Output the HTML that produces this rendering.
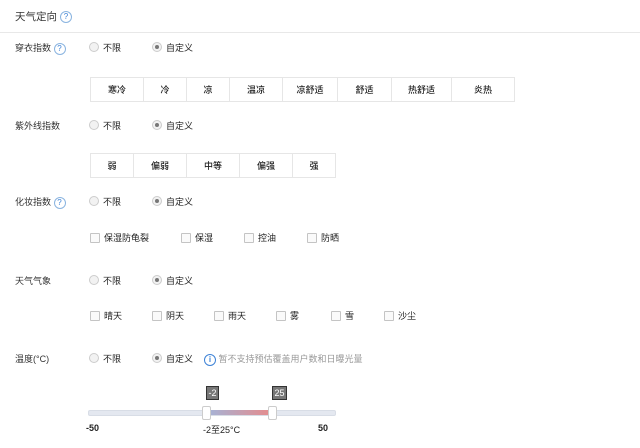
<!DOCTYPE html><html><head><meta charset="utf-8"><style>
body{margin:0;width:640px;height:448px;background:#fff;font-family:"Liberation Sans","Noto Sans CJK SC",sans-serif;font-size:9px;color:#222;position:relative;overflow:hidden}
.a{position:absolute;white-space:nowrap}
.lbl{color:#333}
.q{display:inline-block;width:10px;height:10px;border:1px solid #8ab4e0;border-radius:50%;color:#3d82d6;font-size:8px;text-align:center;line-height:10px;vertical-align:middle}
.r{position:absolute;width:8px;height:8px;border:1px solid #ccc;border-radius:50%;background:#f2f2f2}
.r.on::after{content:"";position:absolute;left:2px;top:2px;width:4px;height:4px;border-radius:50%;background:#777}
.cb{position:absolute;width:8px;height:8px;border:1px solid #c4c4c4;border-radius:1px;background:#fafafa}
table{position:absolute;border-collapse:collapse;font-size:9px;color:#222;font-weight:500}
td{border:1px solid #e6e6e6;text-align:center;height:23px;padding:0}
</style></head><body>
<div class="a" style="left:15px;top:9px;font-size:10.5px;color:#333">天气定向 <span class="q">?</span></div>
<div class="a" style="left:0;top:32px;width:640px;height:1px;background:#e8e8e8"></div>

<div class="a lbl" style="left:15px;top:41px">穿衣指数 <span class="q">?</span></div>
<div class="r" style="left:89px;top:42px"></div><div class="a" style="left:103px;top:41px">不限</div>
<div class="r on" style="left:152px;top:42px"></div><div class="a" style="left:166px;top:41px">自定义</div>
<table style="left:90px;top:77px"><tr><td style="width:52px">寒冷</td><td style="width:42px">冷</td><td style="width:42px">凉</td><td style="width:52px">温凉</td><td style="width:54px">凉舒适</td><td style="width:53px">舒适</td><td style="width:59px">热舒适</td><td style="width:62px">炎热</td></tr></table>

<div class="a lbl" style="left:15px;top:119px">紫外线指数</div>
<div class="r" style="left:89px;top:120px"></div><div class="a" style="left:103px;top:119px">不限</div>
<div class="r on" style="left:152px;top:120px"></div><div class="a" style="left:166px;top:119px">自定义</div>
<table style="left:90px;top:153px"><tr><td style="width:42px">弱</td><td style="width:52px">偏弱</td><td style="width:52px">中等</td><td style="width:52px">偏强</td><td style="width:42px">强</td></tr></table>

<div class="a lbl" style="left:15px;top:195px">化妆指数 <span class="q">?</span></div>
<div class="r" style="left:89px;top:196px"></div><div class="a" style="left:103px;top:195px">不限</div>
<div class="r on" style="left:152px;top:196px"></div><div class="a" style="left:166px;top:195px">自定义</div>
<div class="cb" style="left:90px;top:233px"></div><div class="a" style="left:104px;top:231px">保湿防龟裂</div>
<div class="cb" style="left:181px;top:233px"></div><div class="a" style="left:195px;top:231px">保湿</div>
<div class="cb" style="left:244px;top:233px"></div><div class="a" style="left:258px;top:231px">控油</div>
<div class="cb" style="left:307px;top:233px"></div><div class="a" style="left:321px;top:231px">防晒</div>

<div class="a lbl" style="left:15px;top:274px">天气气象</div>
<div class="r" style="left:89px;top:275px"></div><div class="a" style="left:103px;top:274px">不限</div>
<div class="r on" style="left:152px;top:275px"></div><div class="a" style="left:166px;top:274px">自定义</div>
<div class="cb" style="left:90px;top:311px"></div><div class="a" style="left:104px;top:309px">晴天</div>
<div class="cb" style="left:152px;top:311px"></div><div class="a" style="left:166px;top:309px">阴天</div>
<div class="cb" style="left:214px;top:311px"></div><div class="a" style="left:228px;top:309px">雨天</div>
<div class="cb" style="left:276px;top:311px"></div><div class="a" style="left:290px;top:309px">雾</div>
<div class="cb" style="left:331px;top:311px"></div><div class="a" style="left:345px;top:309px">雪</div>
<div class="cb" style="left:384px;top:311px"></div><div class="a" style="left:398px;top:309px">沙尘</div>

<div class="a lbl" style="left:15px;top:352px">温度(°C)</div>
<div class="r" style="left:89px;top:353px"></div><div class="a" style="left:103px;top:352px">不限</div>
<div class="r on" style="left:152px;top:353px"></div><div class="a" style="left:166px;top:352px">自定义</div>
<div class="a" style="left:204px;top:352px;color:#999"><span style="display:inline-block;width:10px;height:10px;border:1px solid #3d82d6;border-radius:50%;color:#3d82d6;font-size:8px;font-weight:bold;text-align:center;line-height:10px;vertical-align:middle">i</span> 暂不支持预估覆盖用户数和日曝光量</div>

<div class="a" style="left:206px;top:386px;width:11px;height:12px;background:#777;border:1px solid #333;color:#fff;font-size:9px;text-align:center;line-height:12px">-2</div>
<div class="a" style="left:272px;top:386px;width:13px;height:12px;background:#777;border:1px solid #333;color:#fff;font-size:9px;text-align:center;line-height:12px">25</div>
<div class="a" style="left:88px;top:410px;width:246px;height:4px;background:#e4e8f0;border:1px solid #d8dde6;border-radius:2px"></div>
<div class="a" style="left:207px;top:410px;width:66px;height:5px;background:linear-gradient(to right,#a4b4d8,#e88a8a)"></div>
<div class="a" style="left:202px;top:406px;width:7px;height:12px;background:#fff;border:1px solid #ccc;border-radius:2px"></div>
<div class="a" style="left:268px;top:406px;width:7px;height:12px;background:#fff;border:1px solid #ccc;border-radius:2px"></div>
<div class="a" style="left:86px;top:423px;font-weight:bold">-50</div>
<div class="a" style="left:203px;top:423px">-2至25°C</div>
<div class="a" style="left:318px;top:423px;font-weight:bold">50</div>
</body></html>
